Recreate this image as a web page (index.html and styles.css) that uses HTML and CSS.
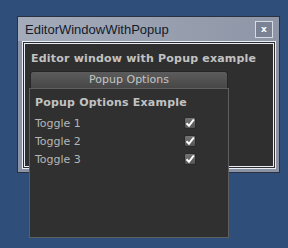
FILE: index.html
```html
<!DOCTYPE html>
<html>
<head>
<meta charset="utf-8">
<link rel="stylesheet" href="styles.css">
</head>
<body>
<div class="window">
  <div class="titlebar">
    <span class="title">EditorWindowWithPopup</span>
    <span class="close">x</span>
  </div>
  <div class="frame">
    <div class="content">
      <div class="heading">Editor window with Popup example</div>
      <div class="button">Popup Options</div>
    </div>
  </div>
</div>
<div class="popup">
  <div class="heading">Popup Options Example</div>
  <div class="row"><span>Toggle 1</span><span class="check"><svg width="10" height="10" viewBox="0 0 10 10"><path d="M1.5 5.2 L4 7.8 L8.8 1.5" fill="none" stroke="#fff" stroke-width="2"/></svg></span></div>
  <div class="row"><span>Toggle 2</span><span class="check"><svg width="10" height="10" viewBox="0 0 10 10"><path d="M1.5 5.2 L4 7.8 L8.8 1.5" fill="none" stroke="#fff" stroke-width="2"/></svg></span></div>
  <div class="row"><span>Toggle 3</span><span class="check"><svg width="10" height="10" viewBox="0 0 10 10"><path d="M1.5 5.2 L4 7.8 L8.8 1.5" fill="none" stroke="#fff" stroke-width="2"/></svg></span></div>
</div>
</body>
</html>
```
FILE: styles.css
```css
html, body {
  margin: 0;
  padding: 0;
}
body {
  background: #2f4e7a;
  width: 288px;
  height: 248px;
  overflow: hidden;
  position: relative;
  font-family: "DejaVu Sans", sans-serif;
  font-size: 11px;
  line-height: 13px;
}
.window {
  box-sizing: border-box;
  margin: 16px 0 0 17px;
  width: 263px;
  height: 157px;
  border: 1px solid #2a3140;
  background: #8a92a3;
  display: flex;
  flex-direction: column;
}
.titlebar {
  height: 24px;
  flex: none;
  display: flex;
  align-items: flex-start;
  justify-content: space-between;
  padding: 0 6px 0 7px;
  background: linear-gradient(90deg, #a4acbb 0%, #9aa2b2 45%, #8d95a6 100%);
}
.title {
  font-family: "Liberation Sans", Arial, sans-serif;
  font-size: 13px;
  line-height: 15px;
  margin-top: 5px;
  color: #141a2a;
}
.close {
  box-sizing: border-box;
  margin-top: 4px;
  width: 18px;
  height: 17px;
  border: 1px solid #d6dbe4;
  background: #7a8294;
  color: #fff;
  font-family: "DejaVu Sans", sans-serif;
  font-weight: bold;
  font-size: 9px;
  line-height: 14px;
  text-align: center;
}
.frame {
  flex: 1;
  margin: 0 3px 3px 4px;
  border: 3px double #e8ecf4;
  background: #2f2f2f;
  display: flex;
}
.content {
  flex: 1;
  padding: 8px 0 0 6px;
}
.heading {
  font-weight: bold;
  letter-spacing: 0.2px;
  color: #c2c2c2;
}
.button {
  box-sizing: border-box;
  margin: 6px 0 0 -1px;
  width: 198px;
  height: 17px;
  border: 1px solid #262626;
  border-bottom: none;
  border-radius: 3px 3px 0 0;
  background: linear-gradient(#5c5c5c, #474747);
  color: #c4c4c4;
  text-align: center;
  line-height: 15px;
}
.popup {
  position: absolute;
  left: 29px;
  top: 88px;
  box-sizing: border-box;
  width: 200px;
  height: 150px;
  border: 1px solid #5e5e5e;
  background: #303030;
  padding: 7px 0 0 5px;
}
.popup .heading {
  margin-bottom: 5px;
}
.row {
  display: grid;
  grid-template-columns: 149px 12px;
  align-items: center;
  height: 18px;
  color: #b6b6b6;
}
.check {
  box-sizing: border-box;
  width: 12px;
  height: 12px;
  border: 1px solid #2a2a2a;
  border-radius: 2px;
  background: linear-gradient(#747474, #545454);
  display: flex;
  align-items: center;
  justify-content: center;
}
.check svg {
  display: block;
}
```
